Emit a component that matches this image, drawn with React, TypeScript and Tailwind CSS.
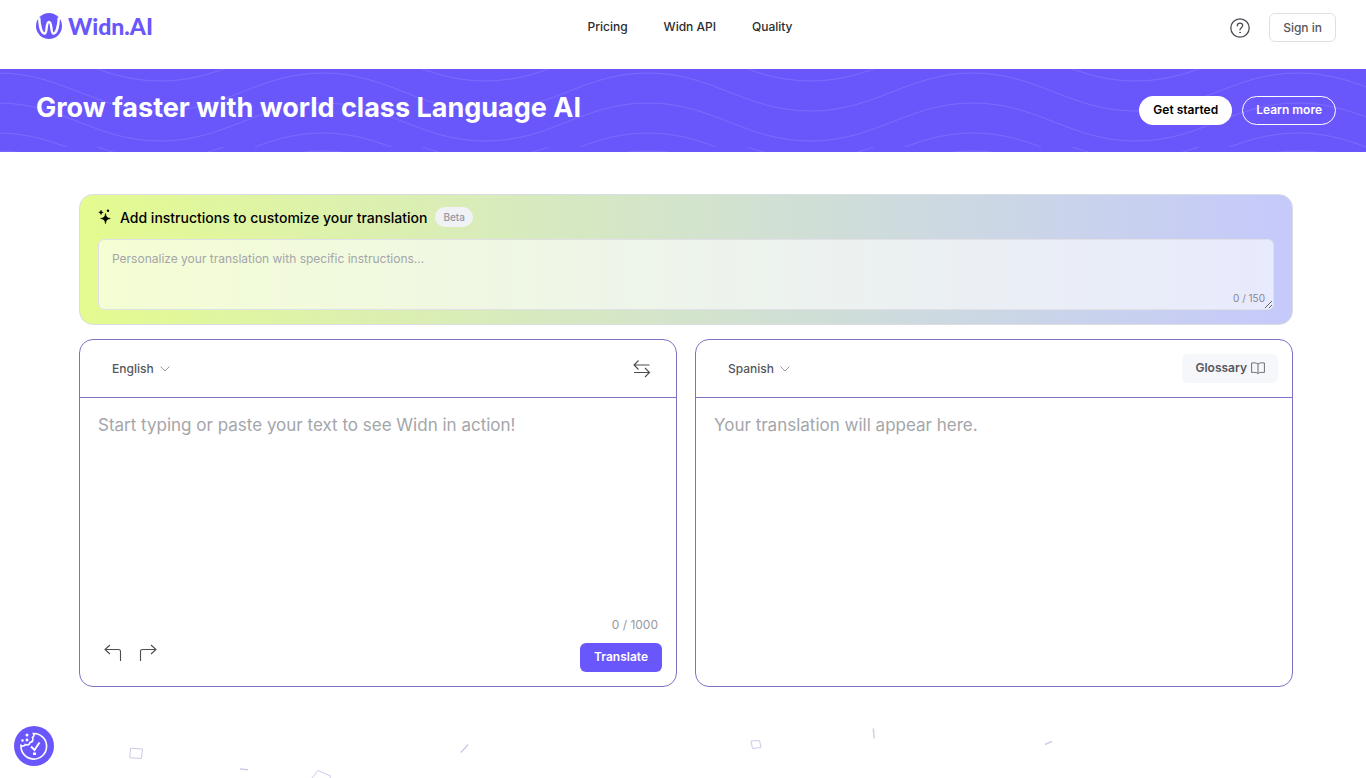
import { useState } from "react";

const languages = ["English", "Spanish", "French", "German", "Portuguese"];

function Logo() {
  return (
    <a href="#home" aria-label="Widn.AI home" className="flex items-center gap-1.5 text-[#6a57fb]">
      <svg viewBox="0 0 26 26" className="size-[26px]" aria-hidden="true">
        <circle cx="13" cy="13" r="13" fill="currentColor" />
        <path
          d="M3.200 4.500C3.500 13 5.500 20.500 8.600 20.500C11.600 20.500 9.600 9 13 9C16.400 9 14.400 20.500 17.400 20.500C20.500 20.500 22.500 13 22.800 4.500"
          fill="none"
          stroke="#fff"
          strokeWidth="2.400"
        />
      </svg>
      <span className="font-['Lato','Liberation_Sans',sans-serif] text-[23px] leading-6 font-black">Widn.AI</span>
    </a>
  );
}

function Waves() {
  return (
    <svg className="absolute inset-0 h-full w-full" aria-hidden="true">
      <defs>
        <pattern id="waves" x="-2" y="0" width="325" height="78" patternUnits="userSpaceOnUse">
          <g fill="none" stroke="#7b6bff" strokeWidth="1">
            <path d="M0-26C65-26 97 12 162.500 12S260-26 325-26" />
            <path d="M0 4C65 4 97 42 162.500 42S260 4 325 4" />
            <path d="M0 34C65 34 97 72 162.500 72S260 34 325 34" />
            <path d="M0 64C65 64 97 102 162.500 102S260 64 325 64" />
          </g>
        </pattern>
      </defs>
      <rect width="100%" height="100%" fill="url(#waves)" />
    </svg>
  );
}

function LanguageSelect({ id, label, value, onChange }: { id: string; label: string; value: string; onChange: (v: string) => void }) {
  return (
    <div className="flex items-center gap-1.5">
      <select
        id={id}
        aria-label={label}
        value={value}
        onChange={(e) => onChange(e.target.value)}
        className="appearance-none bg-transparent text-[12px] leading-5 font-medium text-[#55575c] [field-sizing:content]"
      >
        {languages.map((l) => (
          <option key={l}>{l}</option>
        ))}
      </select>
      <svg viewBox="0 0 10 6" className="h-1.5 w-2.5" fill="none" stroke="#9a9ca3" aria-hidden="true">
        <path d="M.5.5 5 5 9.500.5" />
      </svg>
    </div>
  );
}

function Confetti() {
  return (
    <svg viewBox="0 0 1366 70" className="mt-[21px] w-full" fill="none" stroke="#cdcbe8" aria-hidden="true">
      <path d="M130.500 40.200 142.500 41 141.500 50.500 129.800 49.800Z" />
      <path d="M240 61 248 61.800M461 44.500 468 36.500" strokeWidth="1.400" />
      <path d="M312 70 318 62.500 330.500 68 330 70" />
      <path d="M751 33 759.500 32.500 761 39.500 752.500 40.500Z" />
      <path d="M873.300 20.500 874.200 30.500M1045 36.500 1052 33.300" strokeWidth="1.400" />
    </svg>
  );
}

export default function App() {
  const [instructions, setInstructions] = useState("");
  const [source, setSource] = useState("");
  const [from, setFrom] = useState("English");
  const [to, setTo] = useState("Spanish");

  return (
    <div className="bg-white font-['Inter','Liberation_Sans',sans-serif] text-[#2b2c30]">
      <header className="flex h-[69px] items-start pt-[13px] pr-[30px] pl-9">
        <div className="flex flex-1 items-center">
          <Logo />
        </div>
        <nav className="flex h-7 items-center gap-9 pl-2 text-[12px] font-medium">
          <a href="#pricing">Pricing</a>
          <a href="#api">Widn API</a>
          <a href="#quality">Quality</a>
        </nav>
        <div className="flex flex-1 items-center justify-end gap-[19px]">
          <button aria-label="Help">
            <svg viewBox="0 0 20 20" className="size-5" fill="none" stroke="#4b4d52" strokeWidth="1.300" strokeLinecap="round" aria-hidden="true">
              <circle cx="10" cy="10" r="9.200" />
              <path d="M7.300 7.800C7.300 6.200 8.400 5.200 10 5.200S12.700 6.200 12.700 7.600C12.700 9.600 10 9.700 10 11.800" />
              <circle cx="10" cy="14.500" r=".5" fill="#4b4d52" stroke="#4b4d52" strokeWidth=".6" />
            </svg>
          </button>
          <button className="h-[29px] rounded-md border border-[#dfe0e4] px-[13px] text-[12px] font-medium text-[#55575c]">Sign in</button>
        </div>
      </header>

      <section className="relative flex h-[83px] items-center justify-between bg-[#6a57fb] pr-[30px] pl-9">
        <Waves />
        <h1 className="relative pb-1 text-[27px] font-bold text-white">Grow faster with world class Language AI</h1>
        <div className="relative flex gap-[10px] text-[12px] font-semibold">
          <button className="h-[29px] rounded-full bg-white px-[14px] pb-0.5 text-black">Get started</button>
          <button className="h-[29px] rounded-full border border-white px-[13px] pb-0.5 text-white">Learn more</button>
        </div>
      </section>

      <main className="pt-[42px] pr-[73px] pl-[79px]">
        <section className="rounded-[14px] border border-[#dadde4] bg-linear-to-r from-[#e4fb8f] to-[#c5c9fb] px-[18px] pt-[11px] pb-[14px]">
          <div className="flex h-[22px] items-center">
            <svg viewBox="0 0 14 16" className="mr-2 h-4 w-3.5" fill="#000" aria-hidden="true">
              <path d="M7.500 4.500C8 7.900 9 9 12.300 9.500C9 10.100 8 11.200 7.500 14.700C7 11.200 6 10.100 2.700 9.500C6 9 7 7.900 7.500 4.500Z" stroke="#000" strokeWidth=".6" />
              <path d="M3 1C3.300 2.500 3.800 3 5.300 3.400C3.800 3.800 3.300 4.300 3 5.800C2.700 4.300 2.200 3.800.7 3.400C2.200 3 2.700 2.500 3 1Z" stroke="#000" strokeWidth=".4" />
              <circle cx="10" cy="1.800" r="1.200" />
            </svg>
            <label htmlFor="instructions" className="text-[14px] font-medium text-black">Add instructions to customize your translation</label>
            <span className="ml-2 rounded-full bg-[#f1f2f6] px-2 text-[10px] leading-5 font-medium text-[#96989f]">Beta</span>
          </div>
          <div className="relative mt-[11px]">
            <textarea
              id="instructions"
              maxLength={150}
              value={instructions}
              onChange={(e) => setInstructions(e.target.value)}
              placeholder="Personalize your translation with specific instructions..."
              className="block h-[71px] w-full rounded-md border border-[#dfe1e6] bg-white/60 px-[13px] py-[11px] text-[12px] leading-4 placeholder:text-[#a4a6aa]"
            />
            <span className="absolute right-[9px] bottom-1 text-[10px] text-[#85878f]">{instructions.length} / 150</span>
          </div>
        </section>

        <div className="mt-[14px] grid grid-cols-2 gap-[18px]">
          <section className="flex h-[348px] flex-col rounded-[14px] border border-[#7d73c4]">
            <div className="flex h-[58px] items-center justify-between border-b border-[#7d73c4] pr-[25px] pl-8">
              <LanguageSelect id="from" label="Source language" value={from} onChange={setFrom} />
              <button
                aria-label="Swap languages"
                onClick={() => {
                  setFrom(to);
                  setTo(from);
                }}
              >
                <svg viewBox="0 0 18 18" className="size-[18px]" fill="none" stroke="#4b4d52" strokeWidth="1.100" aria-hidden="true">
                  <path d="M16.500 5H1M5.500.5 1 5 5.500 9.500M1 12.500H16.500M12 8 16.500 12.500 12 17" />
                </svg>
              </button>
            </div>
            <textarea
              aria-label="Source text"
              value={source}
              maxLength={1000}
              onChange={(e) => setSource(e.target.value)}
              placeholder="Start typing or paste your text to see Widn in action!"
              className="flex-1 resize-none px-[18px] py-[15px] text-[17px] leading-6 placeholder:text-[#a4a6aa]"
            />
            <div className="px-[18px] text-right text-[12px] leading-4 text-[#96989f]">{source.length} / 1000</div>
            <div className="mt-[10px] flex justify-between pr-[14px] pb-[14px] pl-6">
              <div className="flex h-5 items-center gap-[17px]">
                <button aria-label="Undo">
                  <svg viewBox="0 0 18 18" className="size-[18px]" fill="none" stroke="#4b4d52" strokeWidth="1.100" aria-hidden="true">
                    <path d="M6 1 1 5.500 6 10M1 5.500H14.500Q16.500 5.500 16.500 7.500V17" />
                  </svg>
                </button>
                <button aria-label="Redo">
                  <svg viewBox="0 0 18 18" className="size-[18px]" fill="none" stroke="#4b4d52" strokeWidth="1.100" aria-hidden="true">
                    <path d="M12 1 17 5.500 12 10M17 5.500H3.500Q1.500 5.500 1.500 7.500V17" />
                  </svg>
                </button>
              </div>
              <button className="h-[29px] rounded-md bg-[#6a57fb] px-[14px] pb-0.5 text-[12px] font-semibold text-white">Translate</button>
            </div>
          </section>

          <section className="flex h-[348px] flex-col rounded-[14px] border border-[#7d73c4]">
            <div className="flex h-[58px] items-center justify-between border-b border-[#7d73c4] pr-[14px] pl-8">
              <LanguageSelect id="to" label="Target language" value={to} onChange={setTo} />
              <button className="flex h-[29px] items-center gap-1 rounded-md bg-[#f6f7fa] px-[13px] pb-0.5 text-[12px] font-semibold text-[#55575c]">
                Glossary
                <svg viewBox="0 0 14 12" className="h-3 w-3.5" fill="none" stroke="#6b6d73" aria-hidden="true">
                  <path d="M7 2C5.500.8 3 .6.6 1V10.500C3 10.200 5.500 10.300 7 11.400C8.500 10.300 11 10.200 13.400 10.500V1C11 .6 8.500.8 7 2ZM7 2V11.400" />
                </svg>
              </button>
            </div>
            <p className="px-[18px] py-[15px] text-[17px] leading-6 text-[#a4a6aa]">Your translation will appear here.</p>
          </section>
        </div>
      </main>

      <Confetti />

      <button aria-label="Cookie preferences" className="fixed bottom-3 left-[14px]">
        <svg viewBox="0 0 40 40" className="size-10" fill="none" stroke="#fff" strokeWidth="1.600" aria-hidden="true">
          <circle cx="20" cy="20" r="20" fill="#6a57fb" stroke="none" />
          <path d="M19.500 7.500A12.800 12.800 0 1 1 7 19.500C8.500 20.500 10.500 20 11.200 18.600C13.500 19.600 15.500 18.500 16 16.500C18.500 16 19.800 14 18.500 11.500C20 10.500 20.300 9 19.500 7.500Z" />
          <path d="M17 20.500 20.500 24 25.500 16.500" strokeWidth="2" />
          <g fill="#fff" stroke="none">
            <rect x="19" y="26.500" width="3" height="2.500" />
            <circle cx="13" cy="9" r="1.500" />
            <circle cx="8.500" cy="14.500" r="1.200" />
            <circle cx="13" cy="14" r="1.400" />
          </g>
        </svg>
      </button>
    </div>
  );
}
